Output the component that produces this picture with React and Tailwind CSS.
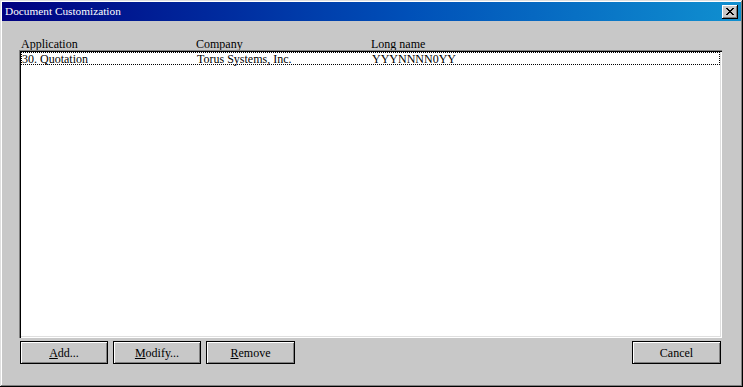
import React from "react";

function Btn({ children, className = "" }) {
  return (
    <div
      className={
        "h-[23px] flex items-center justify-center bg-[#c8c8c8] border border-black shadow-[inset_1px_1px_0_#fff,inset_-1px_-1px_0_#808080] text-[12px] text-black leading-none " +
        className
      }
    >
      {children}
    </div>
  );
}

export default function App() {
  const font = { fontFamily: '"Liberation Serif", "Times New Roman", serif' };
  return (
    <div
      style={font}
      className="w-[743px] h-[387px] bg-[#c8c8c8] flex flex-col p-[2px] shadow-[inset_-1px_-1px_0_#000,inset_1px_1px_0_#dfdfdf,inset_-2px_-2px_0_#808080,inset_2px_2px_0_#fff] overflow-hidden"
    >
      {/* title bar */}
      <div className="h-[19px] flex items-center justify-between bg-[linear-gradient(to_right,#000080,#0050b8_55%,#1090d0)] pl-[3px] pr-[3px]">
        <span className="text-white text-[11.3px] leading-none">Document Customization</span>
        <div className="w-[16px] h-[14px] bg-[#c8c8c8] flex items-center justify-center shadow-[inset_-1px_-1px_0_#000,inset_1px_1px_0_#fff,inset_-2px_-2px_0_#808080]">
          <svg width="8" height="7" viewBox="0 0 8 7" shapeRendering="crispEdges">
            <path d="M0 0h2v1H0zM6 0h2v1H6zM1 1h2v1H1zM5 1h2v1H5zM2 2h4v1H2zM3 3h2v1H3zM2 4h4v1H2zM1 5h2v1H1zM5 5h2v1H5zM0 6h2v1H0zM6 6h2v1H6z" fill="#000" />
          </svg>
        </div>
      </div>

      {/* content */}
      <div className="flex-1 flex flex-col pl-[17px] pr-[19px] pt-[15px]">
        <div className="h-[14px] flex items-end pl-[2px] text-[12px] leading-none text-black">
          <div className="w-[175px]">Application</div>
          <div className="w-[175px]">Company</div>
          <div>Long name</div>
        </div>
        <div className="h-[288px] bg-white shadow-[inset_1px_1px_0_#808080,inset_2px_2px_0_#000,inset_-1px_-1px_0_#fff,inset_-2px_-2px_0_#dfdfdf] p-[2px]">
          <div className="h-[13px] border border-dotted border-black flex items-center text-[12px] leading-none text-black">
            <div className="w-[175px]">30. Quotation</div>
            <div className="w-[175px]">Torus Systems, Inc.</div>
            <div>YYYNNNN0YY</div>
          </div>
        </div>
        <div className="mt-[3px] flex items-center pl-[1px]">
          <Btn className="w-[88px]">
            <span><span className="underline">A</span>dd...</span>
          </Btn>
          <Btn className="w-[88px] ml-[5px]">
            <span><span className="underline">M</span>odify...</span>
          </Btn>
          <Btn className="w-[89px] ml-[5px]">
            <span><span className="underline">R</span>emove</span>
          </Btn>
          <div className="flex-1" />
          <Btn className="w-[89px] mr-[1px]">Cancel</Btn>
        </div>
      </div>
    </div>
  );
}
